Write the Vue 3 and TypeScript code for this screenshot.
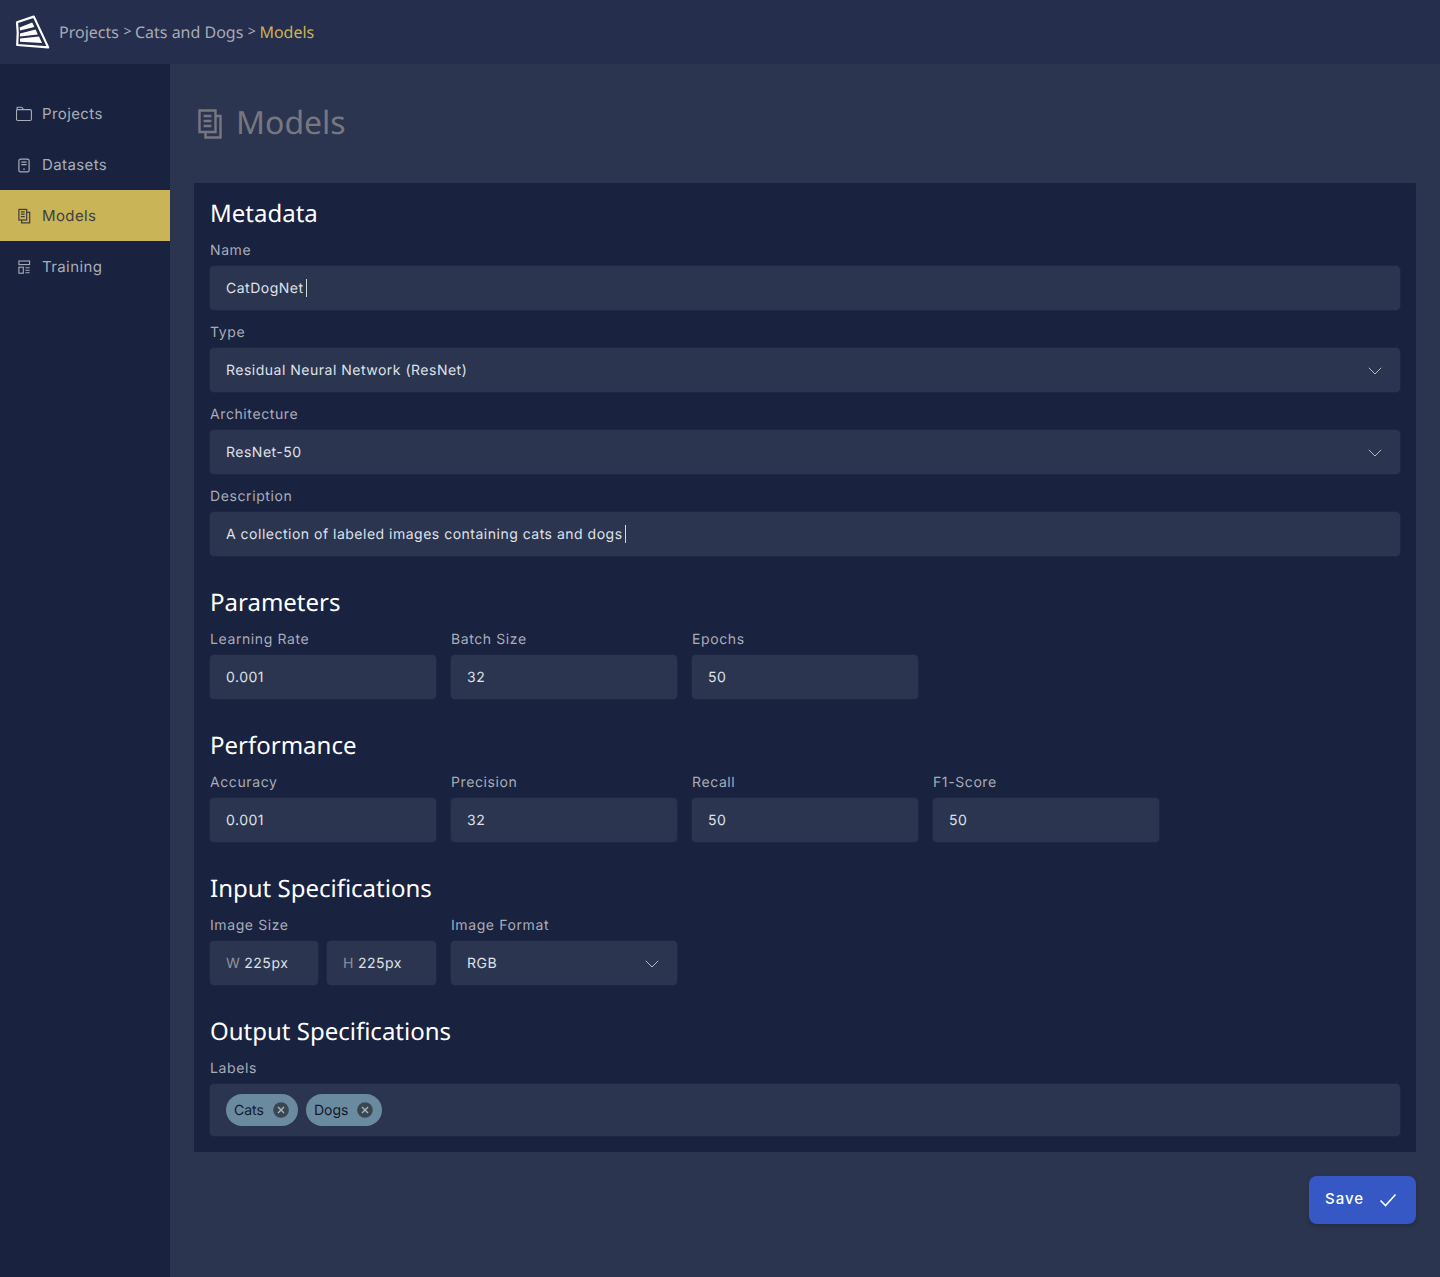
<script setup lang="ts">
interface Field {
  label: string;
  value: string;
  select?: boolean;
  caret?: boolean;
}

const navItems = [
  { name: 'Projects', icon: 'folder' },
  { name: 'Datasets', icon: 'book' },
  { name: 'Models', icon: 'docs', active: true },
  { name: 'Training', icon: 'layout' },
];

const metadata: Field[] = [
  { label: 'Name', value: 'CatDogNet', caret: true },
  { label: 'Type', value: 'Residual Neural Network (ResNet)', select: true },
  { label: 'Architecture', value: 'ResNet-50', select: true },
  { label: 'Description', value: 'A collection of labeled images containing cats and dogs', caret: true },
];

const parameters: Field[] = [
  { label: 'Learning Rate', value: '0.001' },
  { label: 'Batch Size', value: '32' },
  { label: 'Epochs', value: '50' },
];

const performance: Field[] = [
  { label: 'Accuracy', value: '0.001' },
  { label: 'Precision', value: '32' },
  { label: 'Recall', value: '50' },
  { label: 'F1-Score', value: '50' },
];

const labels = ['Cats', 'Dogs'];
</script>

<template>
  <div class="app">
    <header class="topbar">
      <svg class="logo" width="35" height="35" viewBox="0 0 35 35" fill="none">
        <path d="M2 7.2 L18.8 1.6 L33.2 32.4 L2.2 30 Q3.4 18 2 7.2 Z" stroke="#fff" stroke-width="2.2" stroke-linejoin="round" />
        <path d="M4.6 12.5 L17.2 7.4 L19.4 12 L5 15.6 Z" fill="#fff" />
        <path d="M5 18.4 L20.6 14.6 L22.8 19.4 L5 21.4 Z" fill="#fff" />
        <path d="M5 23.4 L24 21.4 L27 28 L5 26.8 Z" fill="#fff" />
      </svg>
      <nav class="crumbs">
        <span>Projects</span><span class="sep">&gt;</span><span>Cats and Dogs</span><span class="sep">&gt;</span><span class="current">Models</span>
      </nav>
    </header>

    <div class="body">
      <aside class="sidebar">
        <a v-for="item in navItems" :key="item.name" class="nav-item" :class="{ active: item.active }">
          <svg v-if="item.icon === 'folder'" class="nav-icon" viewBox="0 0 16 16" fill="none" stroke="currentColor" stroke-width="1.1">
            <path d="M1 3.6V2.2c0-.6.3-1 .9-1h3.5c.4 0 .7.2.9.5l1 1.9h6.8c.7 0 1.3.5 1.3 1.2v8.5c0 .7-.6 1.2-1.3 1.2H1.9c-.8 0-1.4-.5-1.4-1.2V4.8c0-.7.6-1.2 1.4-1.2h5.4" />
          </svg>
          <svg v-else-if="item.icon === 'book'" class="nav-icon" viewBox="0 0 16 16" fill="none" stroke="currentColor" stroke-width="1.2">
            <rect x="2.9" y="2.1" width="10.2" height="12.8" rx="1.6" />
            <path d="M5.4 5.2h5.2M5.4 7.6h5.2M7.2 12.2h1.6" />
          </svg>
          <svg v-else-if="item.icon === 'docs'" class="nav-icon" viewBox="0 0 16 16" fill="none" stroke="currentColor" stroke-width="1.2">
            <rect x="2.9" y="1.4" width="7.8" height="10.6" />
            <path d="M4.9 3.9h3.8M4.9 6.2h3.8M4.9 8.6h3.8M10.7 4.4h3v10.4H5.6V12" />
          </svg>
          <svg v-else class="nav-icon" viewBox="0 0 16 16" fill="none" stroke="currentColor" stroke-width="1.1">
            <rect x="2.9" y="2" width="10.7" height="3.6" />
            <rect x="2.9" y="8.2" width="4.4" height="6" />
            <path d="M9.4 8.7h4.2M9.4 11.2h4.2M9.4 13.7h4.2" />
          </svg>
          <span>{{ item.name }}</span>
        </a>
      </aside>

      <main class="main">
        <h1 class="page-title">
          <svg class="title-icon" viewBox="0 0 24 30" fill="none" stroke="currentColor" stroke-width="2.4">
            <path d="M1.5 1.5h16v21.5h-16z" />
            <path d="M5.6 7h7.8M5.6 12h7.8M5.6 17h7.8" />
            <path d="M17.5 7h5v21.5H7.5V23" />
          </svg>
          <span class="title-text">Models</span>
        </h1>

        <section class="panel">
          <h2>Metadata</h2>
          <div class="stack">
            <div v-for="f in metadata" :key="f.label" class="field">
              <label>{{ f.label }}</label>
              <div class="input">
                <span>{{ f.value }}</span><i v-if="f.caret" class="caret"></i>
                <svg v-if="f.select" class="chevron" viewBox="0 0 14 8" fill="none" stroke="currentColor" stroke-width="1">
                  <path d="M.8.8 7 7 13.2.8" />
                </svg>
              </div>
            </div>
          </div>

          <h2>Parameters</h2>
          <div class="cols">
            <div v-for="f in parameters" :key="f.label" class="field">
              <label>{{ f.label }}</label>
              <div class="input">{{ f.value }}</div>
            </div>
          </div>

          <h2>Performance</h2>
          <div class="cols">
            <div v-for="f in performance" :key="f.label" class="field">
              <label>{{ f.label }}</label>
              <div class="input">{{ f.value }}</div>
            </div>
          </div>

          <h2>Input Specifications</h2>
          <div class="cols">
            <div class="field">
              <label>Image Size</label>
              <div class="size-pair">
                <div class="input"><em>W</em> 225px</div>
                <div class="input"><em>H</em> 225px</div>
              </div>
            </div>
            <div class="field">
              <label>Image Format</label>
              <div class="input">
                RGB
                <svg class="chevron" viewBox="0 0 14 8" fill="none" stroke="currentColor" stroke-width="1">
                  <path d="M.8.8 7 7 13.2.8" />
                </svg>
              </div>
            </div>
          </div>

          <h2>Output Specifications</h2>
          <div class="field">
            <label>Labels</label>
            <div class="input tags">
              <span v-for="tag in labels" :key="tag" class="tag">
                {{ tag }}
                <svg class="tag-x" viewBox="0 0 16 16">
                  <circle cx="8" cy="8" r="7.8" fill="#3a4650" />
                  <path d="M5 5l6 6M11 5l-6 6" stroke="#a5b8c5" stroke-width="1.4" />
                </svg>
              </span>
            </div>
          </div>
        </section>

        <div class="actions">
          <button class="save" type="button">
            <span>Save</span>
            <svg width="18" height="14" viewBox="0 0 18 14" fill="none" stroke="#fff" stroke-width="1.6">
              <path d="M1.5 7.5 6.5 12.5 16.5 1.5" />
            </svg>
          </button>
        </div>
      </main>
    </div>
  </div>
</template>

<style>
html,
body {
  margin: 0;
  background: #2c3550;
}
</style>

<style scoped>
.app {
  width: 1440px;
  height: 1277px;
  display: flex;
  flex-direction: column;
  overflow: hidden;
  font-family: Inter, 'Noto Sans', sans-serif;
  text-rendering: geometricPrecision;
  background: #2c3550;
}

.topbar {
  height: 64px;
  flex: none;
  display: flex;
  align-items: center;
  padding-left: 15px;
  background: #252e4c;
}

.logo {
  flex: none;
  margin-right: 9px;
}

.crumbs {
  display: flex;
  align-items: center;
  font: 16px/24px 'Noto Sans', sans-serif;
  color: #a7abb6;
}

.sep {
  margin: 0 3.5px 0 4.5px;
  font-size: 14px;
}

.current {
  color: #c9b455;
}

.body {
  flex: 1;
  display: flex;
  min-height: 0;
}

.sidebar {
  width: 170px;
  flex: none;
  padding-top: 24px;
  background: #19223f;
}

.nav-item {
  height: 51px;
  display: flex;
  align-items: center;
  gap: 10px;
  padding-left: 16px;
  font-size: 15px;
  letter-spacing: 0.4px;
  color: #a9adb8;
}

.nav-item.active {
  background: #c9b458;
  color: #3f3f3d;
}

.nav-icon {
  width: 16px;
  height: 16px;
  flex: none;
}

.main {
  flex: 1;
  min-width: 0;
  padding: 0 24px;
}

.page-title {
  height: 119px;
  margin: 0;
  display: flex;
  align-items: center;
  gap: 14px;
  padding-left: 4px;
  font: 400 32px/44px 'Noto Sans', sans-serif;
  color: #77787f;
}

.title-icon {
  width: 24px;
  height: 30px;
}

.title-text {
  margin-top: -1px;
}

.panel {
  padding: 16px;
  background: #19223f;
}

h2 {
  margin: 32px 0 11px;
  font: 400 24px/30px 'Noto Sans', sans-serif;
  color: #fff;
}

h2:first-child {
  margin-top: 0;
}

.stack {
  display: flex;
  flex-direction: column;
  gap: 12px;
}

.cols {
  display: grid;
  grid-template-columns: repeat(5, 1fr);
  gap: 15px;
}

label {
  display: block;
  margin-bottom: 6px;
  padding-top: 1px;
  font-size: 14px;
  line-height: 19px;
  letter-spacing: 0.6px;
  color: #a9adb8;
}

.input {
  position: relative;
  height: 44px;
  display: flex;
  align-items: center;
  box-sizing: border-box;
  padding: 0 16px;
  border-radius: 4px;
  font-size: 14px;
  letter-spacing: 0.5px;
  color: #dfe1e8;
  background: #2c3550;
  box-shadow: 0 0 0 1px rgba(44, 53, 80, 0.3);
}

.caret {
  width: 1px;
  height: 18px;
  margin-left: 2px;
  background: #d5d7de;
}

.chevron {
  position: absolute;
  right: 18px;
  top: 19px;
  width: 14px;
  height: 8px;
  color: #b6b8c2;
}

.size-pair {
  display: grid;
  grid-template-columns: 108px 1fr;
  gap: 9px;
}

.size-pair em {
  margin-right: 4px;
  font-style: normal;
  color: #8e919c;
}

.tags {
  height: 52px;
  gap: 8px;
}

.tag {
  height: 32px;
  display: flex;
  align-items: center;
  gap: 9px;
  padding: 0 9px 0 8px;
  border-radius: 16px;
  font-size: 14px;
  letter-spacing: 0;
  color: #14192a;
  background: #6a8a9f;
}

.tag-x {
  width: 16px;
  height: 16px;
}

.actions {
  display: flex;
  justify-content: flex-end;
  margin-top: 24px;
}

.save {
  width: 107px;
  height: 48px;
  display: flex;
  align-items: center;
  gap: 15px;
  padding: 0 0 0 16px;
  border: 0;
  border-radius: 8px;
  font: 500 15px/20px Inter, sans-serif;
  letter-spacing: 1px;
  color: #fff;
  background: #3558c4;
  box-shadow: 0 2px 4px rgba(15, 20, 40, 0.3);
}

.save span {
  margin-top: -2px;
}
</style>
